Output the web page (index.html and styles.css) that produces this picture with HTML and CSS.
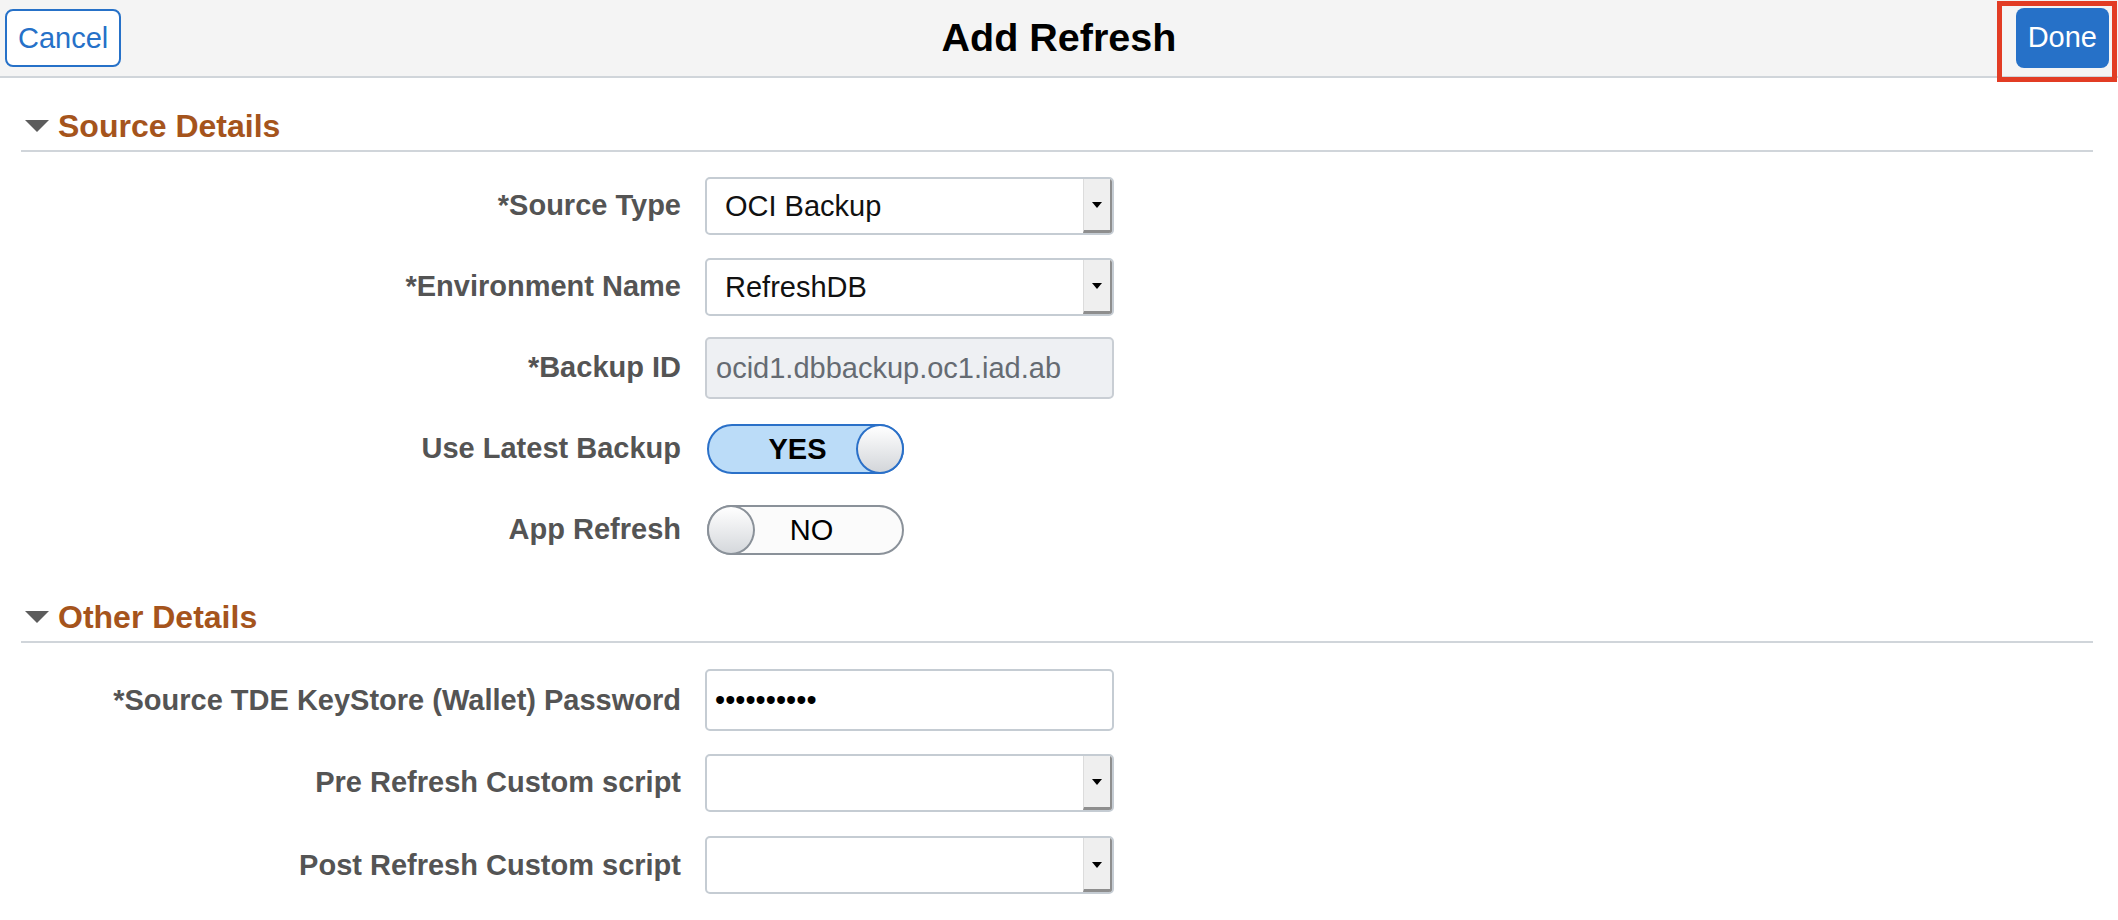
FILE: index.html
```html
<!DOCTYPE html>
<html lang="en">
<head>
<meta charset="utf-8">
<title>Add Refresh</title>
<link rel="stylesheet" href="styles.css">
</head>
<body>
<header class="topbar">
  <div class="bar-left"><button class="btn btn-cancel" type="button">Cancel</button></div>
  <h1 class="title">Add Refresh</h1>
  <div class="bar-right"><button class="btn btn-done" type="button">Done</button></div>
  <span class="highlight" aria-hidden="true"></span>
</header>

<main class="page">
  <section class="section">
    <h2 class="section-head"><span class="caret"></span>Source Details</h2>
    <div class="fields">
      <label class="field-label">*Source Type</label>
      <div class="select"><span class="select-value">OCI Backup</span><span class="select-btn"><span class="arrow"></span></span></div>

      <label class="field-label">*Environment Name</label>
      <div class="select"><span class="select-value">RefreshDB</span><span class="select-btn"><span class="arrow"></span></span></div>

      <label class="field-label">*Backup ID</label>
      <div class="input input-disabled">ocid1.dbbackup.oc1.iad.ab</div>

      <label class="field-label">Use Latest Backup</label>
      <div class="toggle toggle-on"><span class="toggle-text">YES</span><span class="knob"></span></div>

      <label class="field-label">App Refresh</label>
      <div class="toggle toggle-off"><span class="knob"></span><span class="toggle-text">NO</span></div>
    </div>
  </section>

  <section class="section section-other">
    <h2 class="section-head"><span class="caret"></span>Other Details</h2>
    <div class="fields fields-other">
      <label class="field-label">*Source TDE KeyStore (Wallet) Password</label>
      <div class="input input-password">••••••••••</div>

      <label class="field-label">Pre Refresh Custom script</label>
      <div class="select"><span class="select-value"></span><span class="select-btn"><span class="arrow"></span></span></div>

      <label class="field-label">Post Refresh Custom script</label>
      <div class="select"><span class="select-value"></span><span class="select-btn"><span class="arrow"></span></span></div>
    </div>
  </section>
</main>
</body>
</html>
```

FILE: styles.css
```css
* { box-sizing: border-box; }

html, body {
  margin: 0;
  padding: 0;
  background: #ffffff;
  font-family: "Liberation Sans", Arial, Helvetica, sans-serif;
  color: #000;
}

/* ---------- Top bar ---------- */
.topbar {
  position: relative;
  height: 78px;
  background: #f4f4f4;
  border-bottom: 2px solid #d0d5da;
  display: grid;
  grid-template-columns: 1fr auto 1fr;
  align-items: center;
}

.bar-left { padding-left: 5px; }
.bar-right { display: flex; justify-content: flex-end; padding-right: 9px; }

.title {
  margin: 0;
  font-size: 39.5px;
  font-weight: bold;
  line-height: 1;
  color: #000;
}

.btn {
  font-family: inherit;
  font-size: 29px;
  line-height: 1;
  border-radius: 8px;
  cursor: pointer;
}

.btn-cancel {
  height: 58px;
  padding: 0 11px;
  background: #ffffff;
  color: #2671c8;
  border: 2px solid #2671c8;
}

.btn-done {
  height: 60px;
  padding: 0 12px;
  background: #2671c8;
  color: #ffffff;
  border: 0;
  margin-top: -1px;
}

.highlight {
  position: absolute;
  right: 1px;
  top: 1px;
  width: 120px;
  height: 81px;
  border: 5px solid #e23c24;
  pointer-events: none;
}

/* ---------- Content ---------- */
.page {
  padding: 28px 25px 0 21px;
}

.section-head {
  margin: 0;
  display: flex;
  align-items: center;
  height: 46px;
  padding-bottom: 4px;
  line-height: 40px;
  font-size: 32px;
  font-weight: bold;
  color: #a5541c;
  border-bottom: 2px solid #d0d5da;
}

.caret {
  width: 0;
  height: 0;
  margin-left: 4px;
  margin-right: 9px;
  border-left: 12px solid transparent;
  border-right: 12px solid transparent;
  border-top: 12px solid #5c5c5c;
}

.section-other { margin-top: 27px; }

.fields {
  display: grid;
  grid-template-columns: 660px 409px;
  column-gap: 24px;
  grid-auto-rows: 81px;
  align-items: center;
  padding-top: 13px;
}

.fields-other {
  grid-auto-rows: 82.5px;
  padding-top: 16px;
}

.field-label {
  text-align: right;
  font-size: 29px;
  font-weight: bold;
  color: #545454;
  white-space: nowrap;
}

/* select */
.select {
  display: flex;
  height: 58px;
  border: 2px solid #c5ccd3;
  border-radius: 5px;
  background: #ffffff;
  overflow: hidden;
}

.select-value {
  flex: 1;
  padding-left: 18px;
  font-size: 29px;
  line-height: 54px;
  color: #111;
}

.select-btn {
  width: 29px;
  display: flex;
  align-items: center;
  justify-content: center;
  background: #efefef;
  border-left: 1px solid #dcdcdc;
  border-right: 2px solid #8e8e8e;
  border-bottom: 3px solid #8e8e8e;
}

.arrow {
  width: 0;
  height: 0;
  border-left: 5px solid transparent;
  border-right: 5px solid transparent;
  border-top: 6px solid #000;
  margin-top: 2px;
}

/* inputs */
.input {
  height: 62px;
  border: 2px solid #c5ccd3;
  border-radius: 5px;
  background: #ffffff;
  font-size: 29px;
  line-height: 58px;
  padding-left: 9px;
  white-space: nowrap;
  overflow: hidden;
}

.input-disabled {
  background: #eef0f3;
  border-color: #c9ced4;
  color: #656b72;
}

.input-password {
  padding-left: 8px;
  color: #000;
  letter-spacing: 0;
}

/* toggles */
.toggle {
  display: flex;
  align-items: center;
  width: 197px;
  height: 50px;
  margin-left: 2px;
  border: 2px solid;
  border-radius: 25px;
}

.toggle-text {
  flex: 1;
  text-align: center;
  font-size: 29px;
  line-height: 46px;
}

.knob {
  flex: none;
  width: 48px;
  height: 50px;
  margin: -2px;
  border: 2px solid;
  border-radius: 50%;
}

.toggle-on {
  background: #bbdcf8;
  border-color: #2a70c8;
}
.toggle-on .toggle-text {
  font-weight: bold;
  padding-left: 28px;
}
.toggle-on .knob {
  border-color: #2a70c8;
  background: linear-gradient(#ffffff, #d3d6da);
}

.toggle-off {
  background: #fbfbfb;
  border-color: #8a9199;
}
.toggle-off .toggle-text {
  padding-right: 32px;
}
.toggle-off .knob {
  border-color: #8a9199;
  background: linear-gradient(#ffffff, #d5d8dc);
}
```
